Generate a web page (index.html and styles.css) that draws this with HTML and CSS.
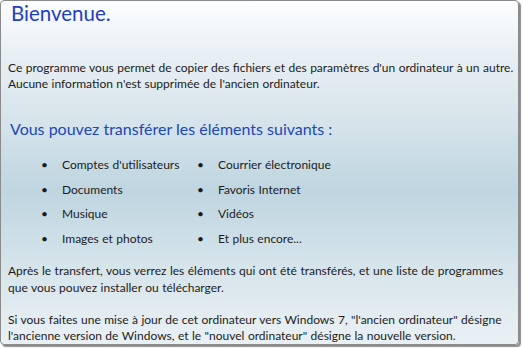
FILE: index.html
```html
<!DOCTYPE html>
<html>
<head>
	<title>Bienvenue</title>
	<link rel="stylesheet" href="styles.css">
	<meta charset="utf-8">
</head>
<body>
	<div class="window">
		<p class="title">Bienvenue.</p>

		<p class="intro">Ce programme vous permet de copier des fichiers et des paramètres d'un ordinateur à un autre.<br>Aucune information n'est supprimée de l'ancien ordinateur.</p>

		<p class="subtitle">Vous pouvez transférer les éléments suivants :</p>

		<ul class="items">
			<li>Comptes d'utilisateurs</li>
			<li>Courrier électronique</li>
			<li>Documents</li>
			<li>Favoris Internet</li>
			<li>Musique</li>
			<li>Vidéos</li>
			<li>Images et photos</li>
			<li>Et plus encore...</li>
		</ul>

		<p class="after">Après le transfert, vous verrez les éléments qui ont été transférés, et une liste de programmes que vous pouvez installer ou télécharger.</p>

		<p class="upgrade">Si vous faites une mise à jour de cet ordinateur vers Windows 7, "l'ancien ordinateur" désigne l'ancienne version de Windows, et le "nouvel ordinateur" désigne la nouvelle version.</p>
	</div>
</body>
</html>
```

FILE: styles.css
```css
* {
	box-sizing: border-box;
	margin: 0;
	padding: 0;
}

body {
	width: 523px;
	height: 349px;
	background: #ffffff;
	font-family: Lato, "Open Sans", sans-serif;
	font-size: 12px;
	word-spacing: 0.4px;
	color: #1c1c1c;
}

.window {
	width: 519px;
	height: 345px;
	border: 1px solid #8a8a8a;
	border-radius: 4px;
	box-shadow: 2px 2px 1px rgba(0, 0, 0, .45);
	padding: 0 4px 0 7px;
	background: linear-gradient(to bottom, #fcfdfe 0px, #e6eef3 60px, #d5e3ea 125px, #bfd5e0 190px, #d6e4eb 265px, #eaf1f5 345px);
	overflow: hidden;
}

.title {
	font-size: 20.5px;
	line-height: 24px;
	color: #1f3fbd;
	padding-left: 3px;
}

.intro {
	margin-top: 35px;
	line-height: 16px;
}

.subtitle {
	margin-top: 27px;
	font-size: 16px;
	line-height: 20px;
	color: #2047b8;
	padding-left: 2px;
	word-spacing: 0;
}

.items {
	list-style: none;
	display: grid;
	grid-template-columns: 156px 200px;
	margin: 14px 0 0 33px;
}

.items li {
	line-height: 24.5px;
	padding-left: 21px;
	position: relative;
}

.items li::before {
	content: "•";
	position: absolute;
	left: 0;
	top: 0;
}

.after {
	margin-top: 11px;
	line-height: 17px;
}

.upgrade {
	margin-top: 16px;
	line-height: 16px;
}
```
